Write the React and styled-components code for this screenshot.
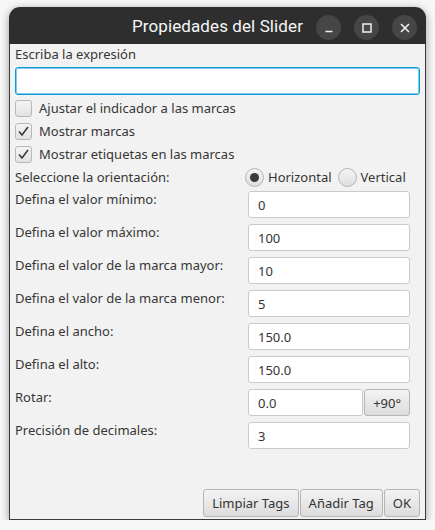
import React, { useState } from "react";
import styled, { createGlobalStyle } from "styled-components";

const GlobalStyle = createGlobalStyle`
  html, body {
    margin: 0;
    padding: 0;
    background: #f7f7f7;
  }
  body {
    font-family: "Noto Sans", "Open Sans", sans-serif;
    font-size: 13px;
    color: #333;
  }
`;

const Page = styled.div`
  padding: 7px 9px 0 9px;
  width: 417px;
`;

const Window = styled.div`
  width: 417px;
  height: 513px;
  display: flex;
  flex-direction: column;
  border-radius: 11px 11px 0 0;
  box-shadow: 0 2px 9px rgba(0, 0, 0, 0.38);
  overflow: hidden;
`;

const TitleBar = styled.div`
  height: 37px;
  flex: none;
  background: #2e2e2e;
  position: relative;
  display: flex;
  align-items: center;
  justify-content: flex-end;
  padding: 4px 9px 0 0;
  box-sizing: border-box;
  gap: 13px;
`;

const Title = styled.div`
  position: absolute;
  left: 0;
  right: 0;
  top: 0;
  bottom: 0;
  display: flex;
  align-items: center;
  justify-content: center;
  color: #f6f6f6;
  font-family: Roboto, "Noto Sans", sans-serif;
  font-size: 17px;
  font-weight: 400;
  letter-spacing: 0.1px;
  pointer-events: none;
`;

const WinButton = styled.div`
  width: 25px;
  height: 25px;
  border-radius: 50%;
  background: #464646;
  display: flex;
  align-items: center;
  justify-content: center;
  position: relative;
  z-index: 1;
`;

const Body = styled.div`
  flex: 1;
  background: #f2f2f2;
  border: 1px solid #3b3b3b;
  border-top: none;
  display: flex;
  flex-direction: column;
  padding: 2px 5px 2px 5px;
`;

const Label = styled.div`
  line-height: 17px;
  color: #363636;
  white-space: nowrap;
`;

const ExprInput = styled.div`
  margin-top: 4px;
  height: 28px;
  box-sizing: border-box;
  border: 1px solid #0a9bd4;
  box-shadow: inset 0 0 0 1px #7fcdee;
  border-radius: 3px;
  background: #fff;
`;

const CheckRow = styled.div`
  display: flex;
  align-items: center;
  gap: 7px;
  height: 23px;
  margin-top: ${(p) => (p.first ? "2px" : "0")};
`;

const Box = styled.div`
  width: 17px;
  height: 17px;
  box-sizing: border-box;
  border: 1px solid #b8b8b8;
  border-radius: 3px;
  background: linear-gradient(#f4f4f4, #e2e2e2);
  display: flex;
  align-items: center;
  justify-content: center;
`;

const OrientRow = styled.div`
  display: grid;
  grid-template-columns: 230px 1fr;
  align-items: center;
  height: 23px;
`;

const RadioGroup = styled.div`
  display: flex;
  align-items: center;
`;

const RadioItem = styled.div`
  display: flex;
  align-items: center;
  gap: 4px;
  margin-right: 6px;
`;

const RadioCircle = styled.div`
  width: 19px;
  height: 19px;
  box-sizing: border-box;
  border-radius: 50%;
  border: 1px solid #b5b5b5;
  background: linear-gradient(#f5f5f5, #dedede);
  display: flex;
  align-items: center;
  justify-content: center;
  &::after {
    content: "";
    display: ${(p) => (p.checked ? "block" : "none")};
    width: 9px;
    height: 9px;
    border-radius: 50%;
    background: #3a3a3a;
  }
`;

const FieldGrid = styled.div`
  display: grid;
  grid-template-columns: 233px 162px;
  row-gap: 6px;
  margin-top: 2px;
`;

const Field = styled.div`
  height: 27px;
  box-sizing: border-box;
  border: 1px solid #cacaca;
  border-radius: 3px;
  background: #fff;
  display: flex;
  align-items: center;
  padding-left: 9px;
  color: #333;
  flex: ${(p) => (p.grow ? 1 : "none")};
`;

const FieldPair = styled.div`
  display: flex;
  gap: 1px;
`;

const Button = styled.div`
  height: ${(p) => (p.h ? p.h : 28)}px;
  box-sizing: border-box;
  padding: 0 ${(p) => (p.pad ? p.pad : 8)}px;
  border: 1px solid #b6b6b6;
  border-radius: 3px;
  background: linear-gradient(#f3f3f3, #dcdcdc);
  display: flex;
  align-items: center;
  justify-content: center;
  color: #333;
  white-space: nowrap;
`;

const Footer = styled.div`
  margin-top: auto;
  display: flex;
  justify-content: flex-end;
  gap: 1px;
`;

const Check = () => (
  <svg width="13" height="13" viewBox="0 0 13 13">
    <path d="M2 6.5 L5 10 L11 2" fill="none" stroke="#3a3a3a" strokeWidth="1.6" />
  </svg>
);

const fields = [
  ["Defina el valor mínimo:", "0"],
  ["Defina el valor máximo:", "100"],
  ["Defina el valor de la marca mayor:", "10"],
  ["Defina el valor de la marca menor:", "5"],
  ["Defina el ancho:", "150.0"],
  ["Defina el alto:", "150.0"],
];

export default function App() {
  const [orient] = useState("h");
  return (
    <Page>
      <GlobalStyle />
      <Window>
        <TitleBar>
          <Title>Propiedades del Slider</Title>
          <WinButton>
            <svg width="12" height="12" viewBox="0 0 12 12">
              <path d="M2.5 9.5 H9.5" stroke="#f0f0f0" strokeWidth="1.6" />
            </svg>
          </WinButton>
          <WinButton>
            <svg width="12" height="12" viewBox="0 0 12 12">
              <rect x="2" y="2" width="8" height="8" fill="none" stroke="#f0f0f0" strokeWidth="1.5" />
            </svg>
          </WinButton>
          <WinButton>
            <svg width="12" height="12" viewBox="0 0 12 12">
              <path d="M2 2 L10 10 M10 2 L2 10" stroke="#f0f0f0" strokeWidth="1.6" />
            </svg>
          </WinButton>
        </TitleBar>
        <Body>
          <Label>Escriba la expresión</Label>
          <ExprInput />
          <CheckRow first>
            <Box />
            <Label>Ajustar el indicador a las marcas</Label>
          </CheckRow>
          <CheckRow>
            <Box>
              <Check />
            </Box>
            <Label>Mostrar marcas</Label>
          </CheckRow>
          <CheckRow>
            <Box>
              <Check />
            </Box>
            <Label>Mostrar etiquetas en las marcas</Label>
          </CheckRow>
          <OrientRow>
            <Label>Seleccione la orientación:</Label>
            <RadioGroup>
              <RadioItem>
                <RadioCircle checked={orient === "h"} />
                <Label>Horizontal</Label>
              </RadioItem>
              <RadioItem>
                <RadioCircle checked={orient === "v"} />
                <Label>Vertical</Label>
              </RadioItem>
            </RadioGroup>
          </OrientRow>
          <FieldGrid>
            {fields.map(([label, value]) => (
              <React.Fragment key={label}>
                <Label>{label}</Label>
                <Field>{value}</Field>
              </React.Fragment>
            ))}
            <Label>Rotar:</Label>
            <FieldPair>
              <Field grow>0.0</Field>
              <Button h={27} pad={8}>+90°</Button>
            </FieldPair>
            <Label>Precisión de decimales:</Label>
            <Field>3</Field>
          </FieldGrid>
          <Footer>
            <Button>Limpiar Tags</Button>
            <Button>Añadir Tag</Button>
            <Button>OK</Button>
          </Footer>
        </Body>
      </Window>
    </Page>
  );
}
